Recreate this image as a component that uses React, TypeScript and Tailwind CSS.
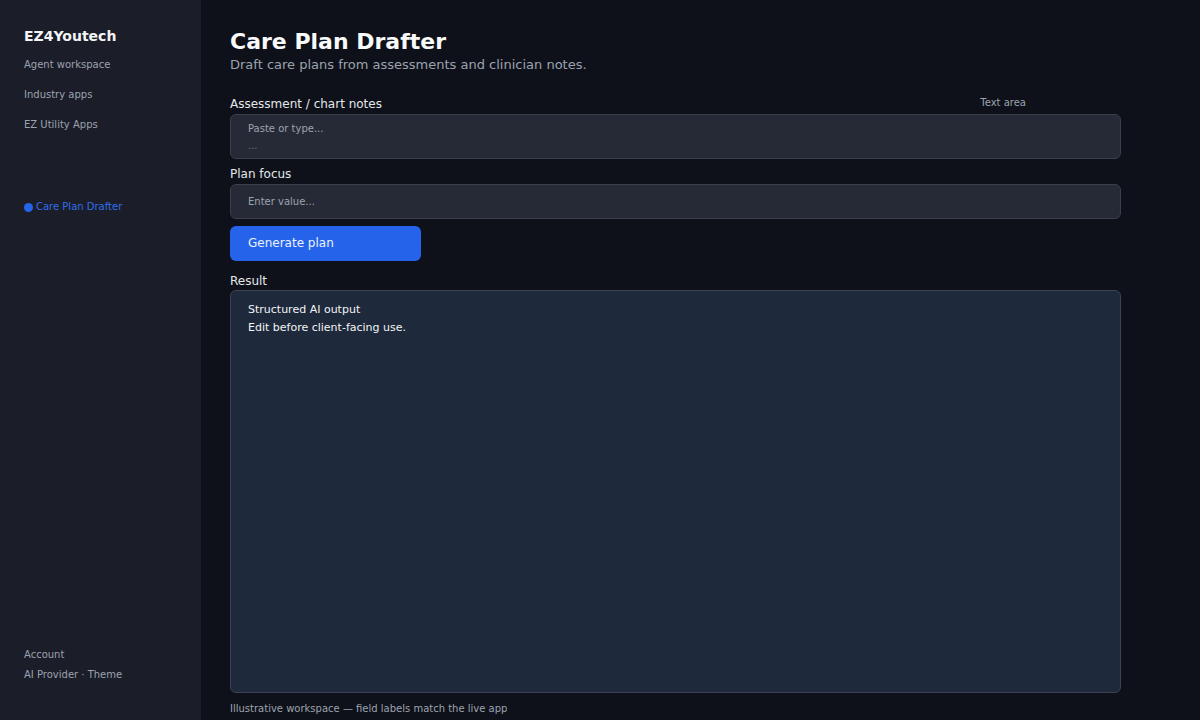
const navItems = ["Agent workspace", "Industry apps", "EZ Utility Apps"];

function Sidebar() {
  return (
    <aside className="flex w-[201px] shrink-0 flex-col bg-[#1b1d29] px-6 pt-[26px] pb-[38px]">
      <div className="text-[14px] font-bold leading-5 text-[#f3f4f6]">EZ4Youtech</div>
      <nav className="mt-[12px] flex flex-col gap-[16px]">
        {navItems.map((item) => (
          <a key={item} className="text-[10px] leading-[14px] text-[#9ca3af]">
            {item}
          </a>
        ))}
      </nav>
      <div className="mt-[68px] flex items-center gap-[3px] text-[10px] leading-[14px] text-[#2f6fe8]">
        <span className="inline-block h-[9px] w-[9px] rounded-full bg-[#2563eb]" />
        Care Plan Drafter
      </div>
      <div className="mt-auto flex flex-col gap-[6px] text-[10px] leading-[14px] text-[#9ca3af]">
        <span>Account</span>
        <span>AI Provider · Theme</span>
      </div>
    </aside>
  );
}

export default function App() {
  return (
    <div
      className="flex h-[720px] w-[1200px] overflow-hidden bg-[#0e1119]"
      style={{ fontFamily: '"DejaVu Sans", "Liberation Sans", sans-serif' }}
    >
      <Sidebar />
      <main className="flex w-[920px] flex-col pl-[29px] pt-[29px]">
        <h1 className="text-[22px] font-bold leading-[26px] text-[#f9fafb]">Care Plan Drafter</h1>
        <p className="mt-[1px] text-[13px] leading-[18px] text-[#9ca3af]">
          Draft care plans from assessments and clinician notes.
        </p>

        <div className="mt-[22px] flex items-center justify-between">
          <label className="text-[12px] leading-[16px] text-[#e5e7eb]">Assessment / chart notes</label>
          <span className="mr-[95px] -translate-y-[1px] text-[10px] leading-[12px] text-[#9ca3af]">Text area</span>
        </div>
        <div className="mt-[2px] h-[45px] w-[891px] rounded-[6px] border border-[#3a3f4c] bg-[#262a36] px-[17px] pt-[7px]">
          <div className="text-[10px] leading-[14px] text-[#9ca3af]">Paste or type...</div>
          <div className="mt-[3px] text-[10px] leading-[14px] text-[#6b7280]">...</div>
        </div>

        <label className="mt-[7px] text-[12px] leading-[16px] text-[#e5e7eb]">Plan focus</label>
        <div className="mt-[2px] flex h-[35px] w-[891px] items-center rounded-[6px] border border-[#3a3f4c] bg-[#262a36] px-[17px]">
          <span className="text-[10px] leading-[14px] text-[#9ca3af]">Enter value...</span>
        </div>

        <button className="mt-[7px] flex h-[35px] w-[191px] items-center rounded-[6px] bg-[#2563eb] px-[18px] pb-[2px] text-left text-[12px] text-[#eef2ff]">
          Generate plan
        </button>

        <label className="mt-[12px] text-[12px] leading-[16px] text-[#e5e7eb]">Result</label>
        <div className="mt-[1px] h-[403px] w-[891px] rounded-[6px] border border-[#3b4354] bg-[#1e293b] px-[17px] pt-[10px]">
          <div className="text-[11px] leading-[18px] text-[#f3f4f6]">Structured AI output</div>
          <div className="text-[11px] leading-[18px] text-[#f3f4f6]">Edit before client-facing use.</div>
        </div>

        <p className="mt-[9px] text-[10px] leading-[14px] text-[#9ca3af]">
          Illustrative workspace — field labels match the live app
        </p>
      </main>
    </div>
  );
}
